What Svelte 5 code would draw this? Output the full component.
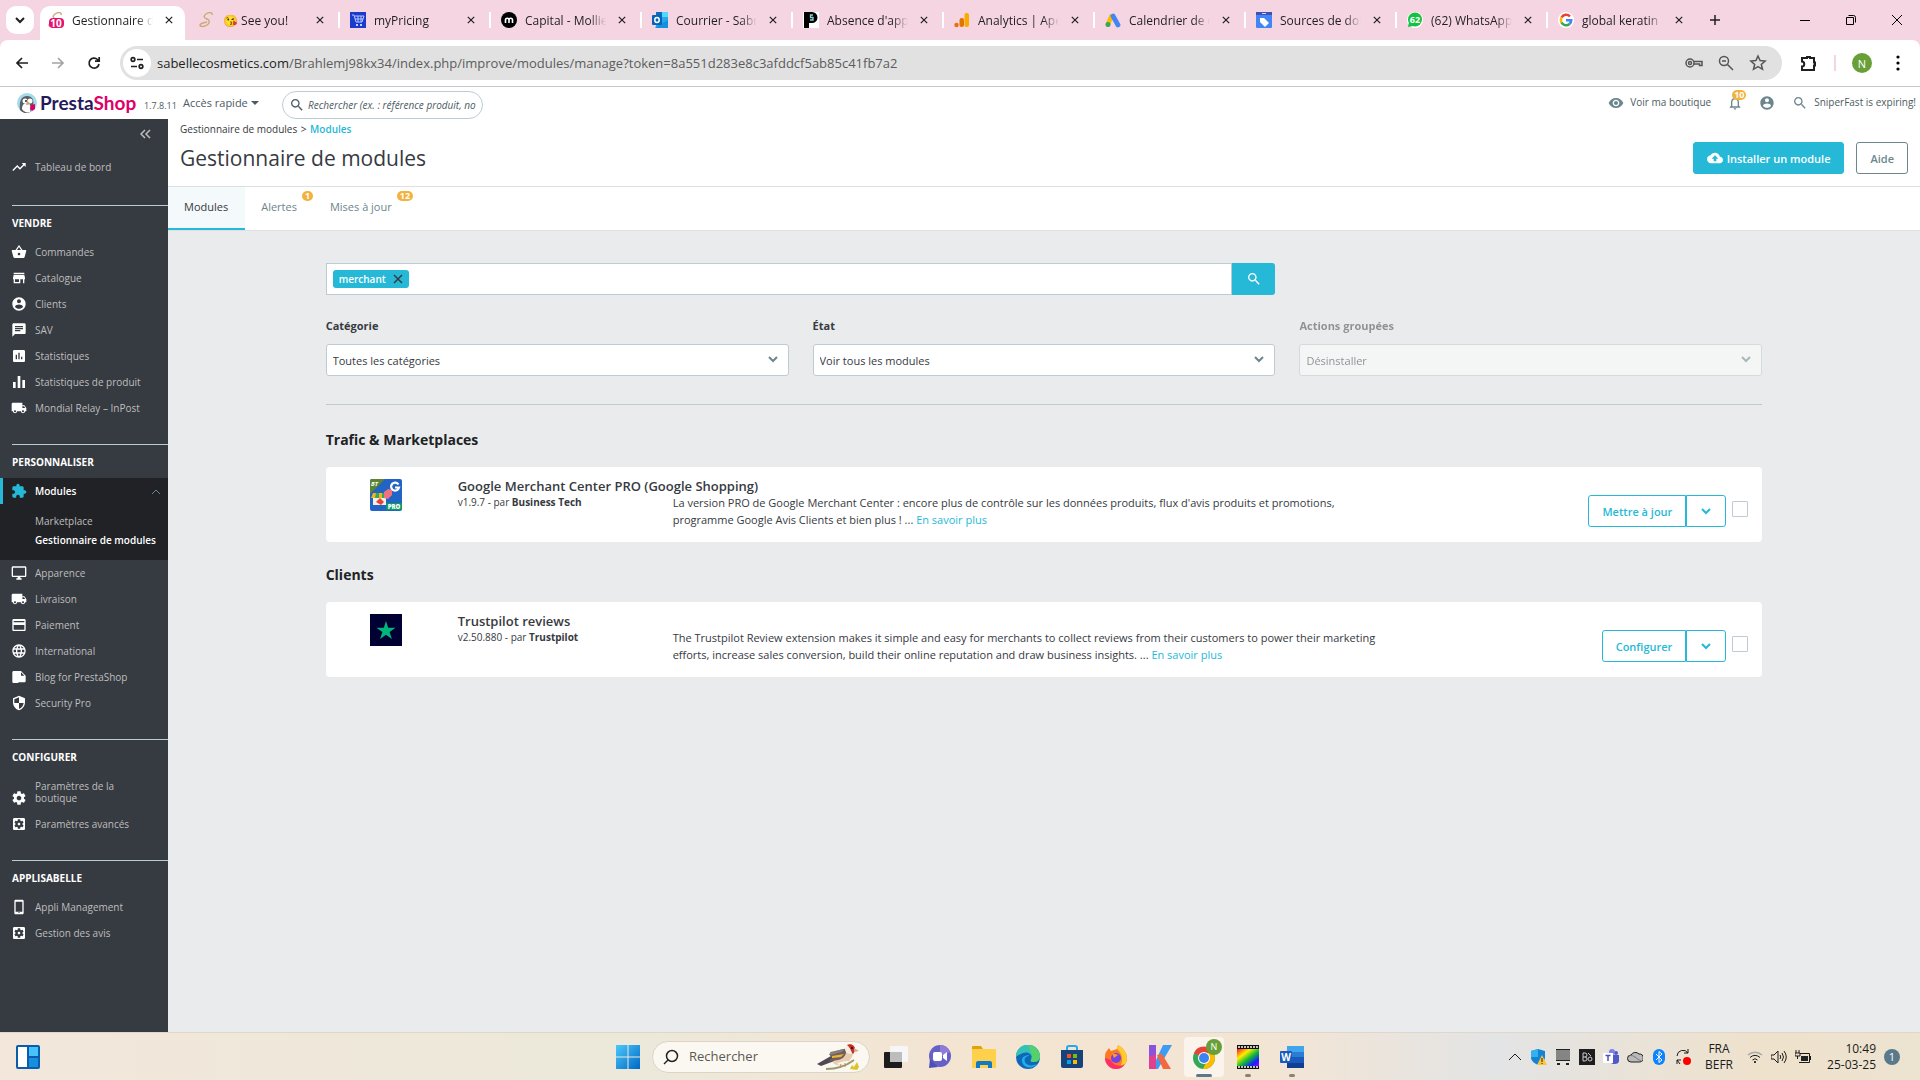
<script lang="ts">
  const tabs = [
    { icon: 'sabelle10', title: 'Gestionnaire de modules', active: true },
    { icon: 'sabelle', title: '😘 See you!' },
    { icon: 'pricing', title: 'myPricing' },
    { icon: 'mollie', title: 'Capital - Mollie Dashboard' },
    { icon: 'outlook', title: 'Courrier - Sabrina' },
    { icon: 'absence', title: "Absence d'apparition" },
    { icon: 'analytics', title: 'Analytics | Aperçu' },
    { icon: 'ads', title: 'Calendrier de diffusion' },
    { icon: 'merchant', title: 'Sources de données' },
    { icon: 'whatsapp', title: '(62) WhatsApp' },
    { icon: 'google', title: 'global keratin 300' }
  ];

  const icons: Record<string, string> = {
    trend: 'M16 6l2.29 2.29-4.88 4.88-4-4L2 16.59 3.41 18l6-6 4 4 6.3-6.29L22 12V6z',
    basket:
      'M17.21 9l-4.38-6.56c-.19-.28-.51-.42-.83-.42-.32 0-.64.14-.83.43L6.79 9H2c-.55 0-1 .45-1 1 0 .09.01.18.04.27l2.54 9.27c.23.84 1 1.46 1.92 1.46h13c.92 0 1.69-.62 1.93-1.46l2.54-9.27L23 10c0-.55-.45-1-1-1h-4.79zM9 9l3-4.4L15 9H9zm3 8c-1.1 0-2-.9-2-2s.9-2 2-2 2 .9 2 2-.9 2-2 2z',
    store: 'M20 4H4v2h16V4zm1 10v-2l-1-5H4l-1 5v2h1v6h10v-6h4v6h2v-6h1zm-9 4H6v-4h6v4z',
    account:
      'M12 2C6.48 2 2 6.48 2 12s4.48 10 10 10 10-4.48 10-10S17.52 2 12 2zm0 3c1.66 0 3 1.34 3 3s-1.34 3-3 3-3-1.34-3-3 1.34-3 3-3zm0 14.2c-2.5 0-4.71-1.28-6-3.22.03-1.99 4-3.08 6-3.08 1.99 0 5.97 1.09 6 3.08-1.29 1.94-3.5 3.22-6 3.22z',
    chat: 'M20 2H4c-1.1 0-1.99.9-1.99 2L2 22l4-4h14c1.1 0 2-.9 2-2V4c0-1.1-.9-2-2-2zM6 9h12v2H6V9zm8 5H6v-2h8v2zm4-6H6V6h12v2z',
    assessment:
      'M19 3H5c-1.1 0-2 .9-2 2v14c0 1.1.9 2 2 2h14c1.1 0 2-.9 2-2V5c0-1.1-.9-2-2-2zM9 17H7v-7h2v7zm4 0h-2V7h2v10zm4 0h-2v-4h2v4z',
    bars: 'M10 21h4V3h-4v18zm-7 0h4v-9H3v9zM17 9v12h4V9h-4z',
    truck:
      'M20 8h-3V4H3c-1.1 0-2 .9-2 2v11h2c0 1.66 1.34 3 3 3s3-1.34 3-3h6c0 1.66 1.34 3 3 3s3-1.34 3-3h2v-5l-3-4zM6 18.5c-.83 0-1.5-.67-1.5-1.5s.67-1.5 1.5-1.5 1.5.67 1.5 1.5-.67 1.5-1.5 1.5zm13.5-9l1.96 2.5H17V9.5h2.5zm-1.5 9c-.83 0-1.5-.67-1.5-1.5s.67-1.5 1.5-1.5 1.5.67 1.5 1.5-.67 1.5-1.5 1.5z',
    extension:
      'M20.5 11H19V7c0-1.1-.9-2-2-2h-4V3.5C13 2.12 11.88 1 10.5 1S8 2.12 8 3.5V5H4c-1.1 0-1.99.9-1.99 2v3.8H3.5c1.49 0 2.7 1.21 2.7 2.7s-1.21 2.7-2.7 2.7H2V20c0 1.1.9 2 2 2h3.8v-1.5c0-1.49 1.21-2.7 2.7-2.7 1.49 0 2.7 1.21 2.7 2.7V22H17c1.1 0 2-.9 2-2v-4h1.5c1.38 0 2.5-1.12 2.5-2.5S21.88 11 20.5 11z',
    desktop:
      'M21 2H3c-1.1 0-2 .9-2 2v12c0 1.1.9 2 2 2h7v2H8v2h8v-2h-2v-2h7c1.1 0 2-.9 2-2V4c0-1.1-.9-2-2-2zm0 14H3V4h18v12z',
    payment:
      'M20 3H4c-1.11 0-1.99.89-1.99 2L2 19c0 1.11.89 2 2 2h16c1.11 0 2-.89 2-2V5c0-1.11-.89-2-2-2zm0 16H4v-7h16v7zm0-11H4V6h16v2z',
    globe:
      'M11.99 2C6.47 2 2 6.48 2 12s4.47 10 9.99 10C17.52 22 22 17.52 22 12S17.52 2 11.99 2zm6.93 6h-2.95c-.32-1.25-.78-2.45-1.38-3.56 1.84.63 3.37 1.91 4.33 3.56zM12 4.04c.83 1.2 1.48 2.53 1.91 3.96h-3.82c.43-1.43 1.08-2.76 1.91-3.96zM4.26 14C4.1 13.36 4 12.69 4 12s.1-1.36.26-2h3.38c-.08.66-.14 1.32-.14 2s.06 1.34.14 2H4.26zm.82 2h2.95c.32 1.25.78 2.45 1.38 3.56-1.84-.63-3.37-1.9-4.33-3.56zm2.95-8H5.08c.96-1.66 2.49-2.93 4.33-3.56C8.81 5.55 8.35 6.75 8.03 8zM12 19.96c-.83-1.2-1.48-2.53-1.91-3.96h3.82c-.43 1.43-1.08 2.76-1.91 3.96zM14.34 14H9.66c-.09-.66-.16-1.32-.16-2s.07-1.35.16-2h4.68c.09.65.16 1.32.16 2s-.07 1.34-.16 2zm.25 5.56c.6-1.11 1.06-2.31 1.38-3.56h2.95c-.96 1.65-2.49 2.93-4.33 3.56zM16.36 14c.08-.66.14-1.32.14-2s-.06-1.34-.14-2h3.38c.16.64.26 1.31.26 2s-.1 1.36-.26 2h-3.38z',
    note: 'M4 3c-1.1 0-2 .9-2 2v14c0 1.1.9 2 2 2h7v-1h9c1.1 0 2-.9 2-2v-8l-7-7zm11 2l5 5h-5z',
    shield:
      'M12 1L3 5v6c0 5.55 3.84 10.74 9 12 5.16-1.26 9-6.45 9-12V5l-9-4zm0 10.99h7c-.53 4.12-3.28 7.79-7 8.94V12H5V6.3l7-3.11v8.8z',
    gear: 'M19.43 12.98c.04-.32.07-.64.07-.98s-.03-.66-.07-.98l2.11-1.65c.19-.15.24-.42.12-.64l-2-3.46c-.12-.22-.39-.3-.61-.22l-2.49 1c-.52-.4-1.08-.73-1.69-.98l-.38-2.65C14.46 2.18 14.25 2 14 2h-4c-.25 0-.46.18-.49.42l-.38 2.65c-.61.25-1.17.59-1.69.98l-2.49-1c-.23-.09-.49 0-.61.22l-2 3.46c-.13.22-.07.49.12.64l2.11 1.65c-.04.32-.07.65-.07.98s.03.66.07.98l-2.11 1.65c-.19.15-.24.42-.12.64l2 3.46c.12.22.39.3.61.22l2.49-1c.52.4 1.08.73 1.69.98l.38 2.65c.03.24.24.42.49.42h4c.25 0 .46-.18.49-.42l.38-2.65c.61-.25 1.17-.59 1.69-.98l2.49 1c.23.09.49 0 .61-.22l2-3.46c.12-.22.07-.49-.12-.64l-2.11-1.65zM12 15.5c-1.93 0-3.5-1.57-3.5-3.5s1.57-3.5 3.5-3.5 3.5 1.57 3.5 3.5-1.57 3.5-3.5 3.5z',
    settingsBox:
      'M12 10c-1.1 0-2 .9-2 2s.9 2 2 2 2-.9 2-2-.9-2-2-2zm7-7H5c-1.11 0-2 .9-2 2v14c0 1.1.89 2 2 2h14c1.11 0 2-.9 2-2V5c0-1.1-.89-2-2-2zm-1.75 9c0 .23-.02.46-.05.68l1.48 1.16c.13.11.17.3.08.45l-1.4 2.42c-.09.15-.27.21-.43.15l-1.74-.7c-.36.28-.76.51-1.18.69l-.26 1.85c-.03.17-.18.3-.35.3h-2.8c-.17 0-.32-.13-.35-.29l-.26-1.85c-.43-.18-.82-.41-1.18-.69l-1.74.7c-.16.06-.34 0-.43-.15l-1.4-2.42c-.09-.15-.05-.34.08-.45l1.48-1.16c-.03-.23-.05-.46-.05-.69 0-.23.02-.46.05-.68l-1.48-1.16c-.13-.11-.17-.3-.08-.45l1.4-2.42c.09-.15.27-.21.43-.15l1.74.7c.36-.28.76-.51 1.18-.69l.26-1.85c.03-.17.18-.3.35-.3h2.8c.17 0 .32.13.35.29l.26 1.85c.43.18.82.41 1.18.69l1.74-.7c.16-.06.34 0 .43.15l1.4 2.42c.09.15.05.34-.08.45l-1.48 1.16c.03.23.05.46.05.69z',
    phone: 'M17 1H7C5.9 1 5 1.9 5 3v18c0 1.1.9 2 2 2h10c1.1 0 2-.9 2-2V3c0-1.1-.9-2-2-2zm-4 20h-2v-1h2v1zm4-2H7V4h10v15z',
    eye: 'M12 4.5C7 4.5 2.73 7.61 1 12c1.73 4.39 6 7.5 11 7.5s9.27-3.11 11-7.5c-1.73-4.39-6-7.5-11-7.5zM12 17c-2.76 0-5-2.24-5-5s2.24-5 5-5 5 2.24 5 5-2.24 5-5 5zm0-8c-1.66 0-3 1.34-3 3s1.34 3 3 3 3-1.34 3-3-1.34-3-3-3z',
    bell: 'M12 22c1.1 0 2-.9 2-2h-4c0 1.1.9 2 2 2zm6-6v-5c0-3.07-1.63-5.64-4.5-6.32V4c0-.83-.67-1.5-1.5-1.5s-1.5.67-1.5 1.5v.68C7.64 5.36 6 7.92 6 11v5l-2 2v1h16v-1l-2-2zm-2 1H8v-6c0-2.48 1.51-4.5 4-4.5s4 2.02 4 4.5v6z',
    search:
      'M15.5 14h-.79l-.28-.27C15.41 12.59 16 11.11 16 9.5 16 5.91 13.09 3 9.5 3S3 5.91 3 9.5 5.91 16 9.5 16c1.61 0 3.09-.59 4.23-1.57l.27.28v.79l5 4.99L20.49 19l-4.99-5zm-6 0C7.01 14 5 11.99 5 9.5S7.01 5 9.5 5 14 7.01 14 9.5 11.99 14 9.5 14z',
    upload:
      'M19.35 10.04C18.67 6.59 15.64 4 12 4 9.11 4 6.6 5.64 5.35 8.04 2.34 8.36 0 10.91 0 14c0 3.31 2.69 6 6 6h13c2.76 0 5-2.24 5-5 0-2.64-2.05-4.78-4.65-4.96zM14 13v4h-4v-4H7l5-5 5 5h-3z'
  };

  const menu = [
    {
      title: 'Vendre',
      items: [
        { icon: 'basket', label: 'Commandes' },
        { icon: 'store', label: 'Catalogue' },
        { icon: 'account', label: 'Clients' },
        { icon: 'chat', label: 'SAV' },
        { icon: 'assessment', label: 'Statistiques' },
        { icon: 'bars', label: 'Statistiques de produit' },
        { icon: 'truck', label: 'Mondial Relay – InPost' }
      ]
    },
    {
      title: 'Personnaliser',
      items: [
        { icon: 'extension', label: 'Modules', children: ['Marketplace', 'Gestionnaire de modules'] },
        { icon: 'desktop', label: 'Apparence' },
        { icon: 'truck', label: 'Livraison' },
        { icon: 'payment', label: 'Paiement' },
        { icon: 'globe', label: 'International' },
        { icon: 'note', label: 'Blog for PrestaShop' },
        { icon: 'shield', label: 'Security Pro' }
      ]
    },
    {
      title: 'Configurer',
      items: [
        { icon: 'gear', label: 'Paramètres de la boutique' },
        { icon: 'settingsBox', label: 'Paramètres avancés' }
      ]
    },
    {
      title: 'Applisabelle',
      items: [
        { icon: 'phone', label: 'Appli Management' },
        { icon: 'settingsBox', label: 'Gestion des avis' }
      ]
    }
  ];

  const filters = [
    { id: 'category', label: 'Catégorie', value: 'Toutes les catégories', disabled: false },
    { id: 'status', label: 'État', value: 'Voir tous les modules', disabled: false },
    { id: 'bulk', label: 'Actions groupées', value: 'Désinstaller', disabled: true }
  ];

  const groups = [
    {
      title: 'Trafic & Marketplaces',
      logo: 'gmc',
      name: 'Google Merchant Center PRO (Google Shopping)',
      version: 'v1.9.7',
      author: 'Business Tech',
      text: "La version PRO de Google Merchant Center : encore plus de contrôle sur les données produits, flux d'avis produits et promotions, programme Google Avis Clients et bien plus ! ...",
      action: 'Mettre à jour'
    },
    {
      title: 'Clients',
      logo: 'trustpilot',
      name: 'Trustpilot reviews',
      version: 'v2.50.880',
      author: 'Trustpilot',
      text: 'The Trustpilot Review extension makes it simple and easy for merchants to collect reviews from their customers to power their marketing efforts, increase sales conversion, build their online reputation and draw business insights. ...',
      action: 'Configurer'
    }
  ];

  const apps = ['taskview', 'chat', 'folder', 'edge', 'store', 'firefox', 'klarna', 'chrome', 'spectrum', 'word'];
  const tray = ['up', 'defender', 'drive', 'bo', 'teams', 'cloud', 'bluetooth', 'sync'];

  let keywords = $state(['merchant']);
  let query = $state('');

  function removeKeyword(word: string) {
    keywords = keywords.filter((k) => k !== word);
  }
</script>

{#snippet icon(name: string)}
  <svg class="icon" viewBox="0 0 24 24" aria-hidden="true"><path d={icons[name]} /></svg>
{/snippet}

{#snippet chevron()}
  <svg class="chevron" viewBox="0 0 12 12" aria-hidden="true"><path d="M2 4l4 4 4-4" /></svg>
{/snippet}

{#snippet cross()}
  <svg class="cross" viewBox="0 0 10 10" aria-hidden="true"><path d="M1 1l8 8M9 1L1 9" /></svg>
{/snippet}

{#snippet favicon(name: string)}
  <svg class="favicon" viewBox="0 0 16 16" aria-hidden="true">
    {#if name === 'sabelle' || name === 'sabelle10'}
      <path d="M13 3c1-3-3-3-6-1S5 6 8 7s3 4 0 6-7 2-7 0 4-2 7-3" fill="none" stroke="#cda878" stroke-width="1.4" />
      {#if name === 'sabelle10'}
        <rect x="1" y="6" width="15" height="10" rx="4" fill="#e5136d" />
        <text x="8" y="15" text-anchor="middle" font-size="10" font-weight="700" fill="#fff">10</text>
      {/if}
    {:else if name === 'pricing'}
      <rect width="16" height="16" fill="#1a3bcc" />
      <path d="M2 3h2l2 7h6l2-6H5M5 7h8M8 4v6M11 4v6" fill="none" stroke="#b9c8ff" />
      <circle cx="7" cy="13" r="1" fill="#fff" /><circle cx="11" cy="13" r="1" fill="#fff" />
    {:else if name === 'mollie'}
      <circle cx="8" cy="8" r="8" fill="#000" />
      <path d="M4.5 11V8a1.7 1.7 0 013.5 0v3V8a1.7 1.7 0 013.5 0v3" fill="none" stroke="#fff" stroke-width="1.6" />
    {:else if name === 'outlook'}
      <path d="M4 0h12v14H4z" fill="#28a8ea" /><path d="M4 0h6v5H4z" fill="#0f6cbd" /><path d="M10 0h6v5h-6z" fill="#50d9ff" />
      <path d="M3 15l13-7v8H4z" fill="#1490df" />
      <rect y="3" width="10" height="10" rx="1" fill="#0364b8" /><ellipse cx="5" cy="8" rx="2.2" ry="2.5" fill="none" stroke="#fff" stroke-width="1.5" />
    {:else if name === 'absence'}
      <rect width="16" height="16" fill="#fff" />
      <path d="M1 0h8a5.5 5.5 0 010 11H6v5H1z" fill="#000" />
      <path d="M10 3H7.500v2.500H10V8H7" fill="none" stroke="#8fd3e0" stroke-width="1.3" />
    {:else if name === 'analytics'}
      <rect x="10.5" y="1" width="4.5" height="14" rx="2" fill="#f9ab00" /><rect x="5.5" y="6" width="4.5" height="9" rx="2" fill="#e37400" /><circle cx="2.5" cy="13" r="2.2" fill="#e8710a" />
    {:else if name === 'ads'}
      <path d="M7 3L3 12" stroke="#fbbc04" stroke-width="4.5" /><path d="M8 4l5 9" stroke="#4285f4" stroke-width="4.8" stroke-linecap="round" /><circle cx="3" cy="12.5" r="2.5" fill="#34a853" />
    {:else if name === 'merchant'}
      <rect width="16" height="16" rx="1" fill="#4285f4" /><path d="M0 0h16v3H0z" fill="#3f51b5" /><path d="M6 1h4v1H6z" fill="#cfdcff" />
      <path d="M4 6h4l5 5-4 4-5-5z" fill="#fff" />
    {:else if name === 'whatsapp'}
      <circle cx="8" cy="8" r="8" fill="#fff" /><circle cx="8" cy="7.5" r="7" fill="#15c143" /><path d="M1 15l1-5 4 4z" fill="#15c143" />
      <text x="8" y="11" text-anchor="middle" font-size="9" font-weight="700" fill="#fff">62</text>
    {:else}
      <circle cx="8" cy="8" r="8" fill="#fff" />
      <g fill="none" stroke-width="2.6">
        <path d="M12 4.5A5.2 5.2 0 003.5 5.5" stroke="#ea4335" /><path d="M3.5 5.5a5.2 5.2 0 000 5" stroke="#fbbc04" />
        <path d="M3.5 10.5a5.2 5.2 0 008 1.5" stroke="#34a853" /><path d="M11.5 12a5 5 0 001.7-3.7H8" stroke="#4285f4" />
      </g>
    {/if}
  </svg>
{/snippet}

{#snippet moduleLogo(name: string)}
  <svg class="module-logo" viewBox="0 0 32 32" aria-hidden="true">
    {#if name === 'gmc'}
      <rect width="32" height="32" rx="2" fill="#2263c6" />
      <path d="M2 0h13L0 15V2a2 2 0 012-2z" fill="#5c8432" />
      <text x="1" y="7" font-size="6" font-weight="700" font-style="italic" fill="#fff">BT</text>
      <path d="M28.500 5.500A4 4 0 1029 8.500H25" fill="none" stroke="#fff" stroke-width="2.2" />
      <path d="M3 15h13v11H3z" fill="#f5efe9" /><path d="M3 14h13l2 5H1z" fill="#f8b319" /><path d="M6 14h3v5H5zM12 14h3l1 5h-4z" fill="#36a852" />
      <path d="M14 13l4-3 4 1v5l-4 4-4-1z" fill="#f0727f" /><path d="M6 23l4-4 4 4-3 3z" fill="#e8452f" />
      <rect x="16" y="24" width="16" height="7" rx="1" fill="#0c9b62" />
      <text x="24" y="30" text-anchor="middle" font-size="6" font-weight="800" fill="#fff">PRO</text>
    {:else}
      <rect width="32" height="32" fill="#000032" />
      <path d="M16 7l2.200 6.800h7.300l-5.900 4.200 2.300 6.900-5.900-4.200-5.900 4.200 2.300-6.900-5.900-4.200h7.300z" fill="#00b67a" />
    {/if}
  </svg>
{/snippet}

{#snippet appIcon(name: string)}
  <svg class="app-icon" viewBox="0 0 24 24" aria-hidden="true">
    {#if name === 'taskview'}
      <rect y="7" width="18" height="16" rx="1" fill="#1c1c1c" /><rect x="6" y="1" width="18" height="16" rx="1" fill="#f6f6f6" /><path d="M6 7h12v10H6z" fill="#bdbdbd" />
    {:else if name === 'chat'}
      <circle cx="12" cy="11" r="11" fill="#6661c8" /><path d="M2 14L1 23l9-1z" fill="#4b4fb8" /><path d="M12 0a11 11 0 0110 7L12 12z" fill="#8f7bd8" />
      <rect x="5" y="7" width="9" height="9" rx="2" fill="#fff" /><path d="M15 10l4-3v9l-4-3z" fill="#fff" />
    {:else if name === 'folder'}
      <path d="M0 2a1 1 0 011-1h8l2 3h11v5H0z" fill="#e0a30b" /><rect y="4" width="24" height="19" rx="1" fill="#ffd04b" />
      <path d="M4 23v-5a2 2 0 012-2h12a2 2 0 012 2v5h-4v-3H8v3z" fill="#0f7ac8" />
    {:else if name === 'edge'}
      <circle cx="12" cy="12" r="12" fill="#0f67b7" /><path d="M0 12A12 12 0 0124 11c0 5-4 6-7 6-2 0-3-1-2-2 3-5-3-9-8-7-3 1-6 3-7 4z" fill="#35c1b8" />
      <path d="M12 0a12 12 0 0112 11c0 5-4 6-7 6-2 0-3-1-2-2 2-5 0-8-3-15z" fill="#56d06b" /><path d="M10 12c-4 4 1 10 8 8l3-1c-3 5-13 5-15-2-1-4 2-7 8-7z" fill="#1faeea" />
    {:else if name === 'store'}
      <path d="M7 6V3a2 2 0 012-2h6a2 2 0 012 2v3" fill="none" stroke="#26a9e8" stroke-width="2" /><path d="M1 5h22v16a2 2 0 01-2 2H3a2 2 0 01-2-2z" fill="#17427a" />
      <path d="M7 9h4v4H7z" fill="#f25022" /><path d="M13 9h4v4h-4z" fill="#7fba00" /><path d="M7 15h4v4H7z" fill="#00a4ef" /><path d="M13 15h4v4h-4z" fill="#ffb900" />
    {:else if name === 'firefox'}
      <path d="M2 7l3-4 2 3c2-1 4-1 6-2l1-4c5 3 9 8 9 13a11 11 0 01-22 0c0-3 0-4 1-6z" fill="#ff7a1f" /><path d="M14 0c5 3 9 8 9 13a11 11 0 01-8 10c5-6 4-14-2-19z" fill="#ffcb2e" />
      <path d="M1 13c0 6 5 11 11 11 4 0 7-2 9-5-5 3-12 2-14-4z" fill="#ff2d6a" /><circle cx="12" cy="13" r="5" fill="#7542e5" /><path d="M8 8c2 1 5 1 6 2l-4 3z" fill="#ff9a28" />
    {:else if name === 'klarna'}
      <path d="M1 0h7v24H1z" fill="#8a52dd" /><path d="M15 0h9L10 24H4z" fill="#3d9df3" /><path d="M9 10l5-1 9 15h-8z" fill="#f5683f" /><path d="M1 12l7-3v15H1z" fill="#df408f" />
    {:else if name === 'chrome'}
      <circle cx="12" cy="13" r="11" fill="#34a853" /><path d="M12 13L2 8a11 11 0 0120 0z" fill="#ea4335" /><path d="M12 13h11a11 11 0 01-12 11l4-9z" fill="#fbbc04" /><path d="M22 8a11 11 0 011 5l-8 3-3-8z" fill="#fbbc04" />
      <circle cx="12" cy="13" r="6" fill="#fff" /><circle cx="12" cy="13" r="5" fill="#3c83f1" />
    {:else if name === 'spectrum'}
      <defs>
        <linearGradient id="rainbow" x2="1" y2="1"><stop stop-color="#f12" /><stop offset=".3" stop-color="#fe0" /><stop offset=".55" stop-color="#1b3" /><stop offset=".8" stop-color="#12f" /><stop offset="1" stop-color="#a0f" /></linearGradient>
      </defs>
      <rect x="1" width="22" height="24" fill="#111" /><rect x="1" y="4" width="22" height="17" fill="url(#rainbow)" />
      <path d="M2 2h20M2 22h20" stroke="#fff" stroke-width="1.5" stroke-dasharray="2 1" />
    {:else}
      <rect x="7" y="1" width="17" height="22" rx="1" fill="#185abd" /><path d="M7 1h17v6H7z" fill="#41a5ee" /><path d="M7 7h17v5H7z" fill="#2b7cd3" /><path d="M7 18h17v5H7z" fill="#103f91" />
      <rect y="6" width="12" height="12" rx="1" fill="#185abd" /><text x="6" y="16" text-anchor="middle" font-size="10" font-weight="700" fill="#fff">W</text>
    {/if}
  </svg>
{/snippet}

{#snippet trayIcon(name: string)}
  <svg class="tray-icon" viewBox="0 0 16 16" aria-hidden="true">
    {#if name === 'up'}
      <path d="M2 11l6-6 6 6" class="line" />
    {:else if name === 'defender'}
      <path d="M7 0l7 2v6c0 4-3 6-7 8-4-2-7-4-7-8V2z" fill="#1383d4" /><path d="M7 0v8H0V2z" fill="#35b1f0" /><path d="M11 6l5 10H6z" fill="#fcc33c" /><path d="M11 9v4M11 14v1" stroke="#222" />
    {:else if name === 'drive'}
      <path d="M1 0h14v11H1z" fill="#858585" /><path d="M1 .5h14M1 11.500h14" stroke="#222" /><path d="M2 14h3v2H2zM11 14h3v2h-3z" fill="#222" />
    {:else if name === 'bo'}
      <rect width="16" height="16" fill="#1d1d1f" /><path d="M4 4v8h2a2 2 0 000-4 2 2 0 000-4zM4 8h2" fill="none" stroke="#ccc" /><circle cx="11" cy="10" r="2" fill="none" stroke="#ccc" /><path d="M9 4l3 3" stroke="#ccc" />
    {:else if name === 'teams'}
      <circle cx="13" cy="4" r="2" fill="#5059c9" /><circle cx="9" cy="3" r="3" fill="#7b83eb" /><path d="M6 6h10v6c0 2-2 3-4 3-4 0-6-2-6-5z" fill="#5059c9" /><rect y="4" width="10" height="10" fill="#fff" />
      <path d="M2.500 6.500h5M5 6.500V12" stroke="#4b53bc" stroke-width="1.5" />
    {:else if name === 'cloud'}
      <path d="M4 13a3 3 0 010-7 5 5 0 018-1 4 4 0 01.500 8z" fill="#b9b9b9" stroke="#222" />
      <path d="M2 7c5-2 7 3 12 5" fill="none" stroke="#777" />
    {:else if name === 'bluetooth'}
      <rect x="2" width="12" height="16" rx="6" fill="#0a84ff" /><path d="M5 5l6 6-3 2.500v-11L11 5l-6 6" fill="none" stroke="#fff" />
    {:else if name === 'sync'}
      <path d="M2 7a6 6 0 0111-3M13 0v4H9M2 15v-4h4M2 11l3 4" class="line" /><circle cx="12" cy="12" r="4" fill="#f00" />
    {:else if name === 'wifi'}
      <path d="M1 6a10 10 0 0114 0" fill="none" stroke="#aaa" stroke-width="1.5" /><path d="M3 8.500a7 7 0 0110 0M5.500 11a3.500 3.500 0 015 0" class="line" /><circle cx="8" cy="13" r="1" />
    {:else if name === 'sound'}
      <path d="M0 6h3l4-4v12l-4-4H0zM9 6q1.500 2 0 4M11 4q3 4 0 8M13 2q4.500 6 0 12" class="line" />
    {:else}
      <path d="M6 7h7v5H6z" fill="#222" /><path d="M5 4.500h9.500v9H4M15.500 7v4M1 1v3M4 1v3M0 4h5v3H0zM2.500 7v3" class="line" />
    {/if}
  </svg>
{/snippet}

<div class="screen">
  <header class="browser">
    <div class="tab-strip">
      <button class="tab-search" type="button" aria-label="Rechercher dans les onglets">{@render chevron()}</button>
      <div class="tab-list">
        {#each tabs as tab}
          <div class="tab" class:active={tab.active}>
            {@render favicon(tab.icon)}
            <span class="tab-title">{tab.title}</span>
            <button type="button" class="tab-close" aria-label="Fermer">{@render cross()}</button>
          </div>
        {/each}
      </div>
      <button class="new-tab" type="button" aria-label="Nouvel onglet">
        <svg viewBox="0 0 12 12"><path d="M6 1v10M1 6h10" /></svg>
      </button>
      <div class="window-controls">
        <button type="button" aria-label="Réduire"><svg viewBox="0 0 10 10"><path d="M0 5.500h10" /></svg></button>
        <button type="button" aria-label="Restaurer"><svg viewBox="0 0 10 10"><path d="M.5 2.500h7v7h-7zM2.500 .5h5a2 2 0 012 2v5" /></svg></button>
        <button type="button" aria-label="Fermer la fenêtre"><svg viewBox="0 0 10 10"><path d="M0 0l10 10M10 0L0 10" /></svg></button>
      </div>
    </div>
    <div class="toolbar">
      <div class="nav-buttons">
        <button type="button" aria-label="Précédent"><svg viewBox="0 0 16 16"><path d="M14 8H3M8 3L3 8l5 5" /></svg></button>
        <button type="button" aria-label="Suivant" disabled><svg viewBox="0 0 16 16"><path d="M2 8h11M8 3l5 5-5 5" /></svg></button>
        <button type="button" aria-label="Actualiser"><svg viewBox="0 0 16 16"><path d="M13 9a5 5 0 11-1.500-4.500L13 6M13.200 2v4.200H9" /></svg></button>
      </div>
      <div class="address">
        <span class="site-info"><svg viewBox="0 0 16 16"><circle cx="4" cy="4.5" r="1.8" /><path d="M8 4.500h6M2 11.500h6" /><circle cx="12" cy="11.5" r="1.8" /></svg></span>
        <p class="url"><span>sabellecosmetics.com</span>/Brahlemj98kx34/index.php/improve/modules/manage?token=8a551d283e8c3afddcf5ab85c41fb7a2</p>
        <div class="address-icons">
          <svg viewBox="0 0 18 18"><circle cx="5" cy="9" r="4" /><circle cx="5" cy="9" r="1.5" /><path d="M9 7.500h8v4h-2.500V10H9" /></svg>
          <svg viewBox="0 0 18 18"><circle cx="7" cy="7" r="4.5" /><path d="M10.500 10.500L16 16M5 7h4" /></svg>
          <svg viewBox="0 0 18 18"><path d="M9 2l2.100 4.600 5 .5-3.800 3.300 1.200 4.900L9 12.700l-4.500 2.600 1.200-4.900L1.900 7.100l5-.5z" /></svg>
        </div>
      </div>
      <button type="button" class="extensions" aria-label="Extensions">
        <svg viewBox="0 0 18 18"><path d="M2 4h5V3h3v1h4v4.500h1v3h-1V16H2v-3.500c3 0 3-5 0-5z" /></svg>
      </button>
      <span class="toolbar-separator"></span>
      <button type="button" class="avatar">N</button>
      <button type="button" class="more" aria-label="Menu"><svg viewBox="0 0 4 16"><circle cx="2" cy="2" r="1.6" /><circle cx="2" cy="8" r="1.6" /><circle cx="2" cy="14" r="1.6" /></svg></button>
    </div>
  </header>

  <div class="shop-header">
    <a class="brand" href="#home">
      <svg viewBox="0 0 20 20" aria-hidden="true">
        <circle cx="10" cy="10" r="10" fill="#a4dbe8" /><path d="M3 17C2 9 4 3 10 3s7 5 6 10l-3 6c-4 2-7 1-10-2z" fill="#5a5e68" />
        <path d="M5 16c0-4 2-6 5-6s4 3 3 9c-3 1-6 0-8-3z" fill="#fff" /><circle cx="8" cy="8" r="2.5" fill="#fff" /><circle cx="13" cy="8" r="2.5" fill="#fff" />
        <circle cx="9" cy="8" r="1" fill="#222" /><path d="M10 8l4 3-5 1z" fill="#c8a06a" /><path d="M14 12l4-1v5l-3 2-2-2z" fill="#df0067" />
      </svg>
      <strong>Presta<span>Shop</span></strong>
    </a>
    <small>1.7.8.11</small>
    <button type="button" class="quick-access">Accès rapide <i></i></button>
    <label class="global-search">
      {@render icon('search')}
      <input type="text" aria-label="Rechercher" placeholder="Rechercher (ex. : référence produit, no" />
    </label>
    <nav class="shop-links">
      <a href="#shop">{@render icon('eye')} Voir ma boutique</a>
      <button type="button" class="bell" aria-label="Notifications">{@render icon('bell')}<span class="badge">10</span></button>
      <button type="button" class="user" aria-label="Compte">{@render icon('account')}</button>
      <a href="#sniperfast">{@render icon('search')} SniperFast is expiring!</a>
    </nav>
  </div>

  <div class="body">
    <aside>
      <button type="button" class="collapse" aria-label="Réduire le menu"><svg viewBox="0 0 12 10"><path d="M5 1L1 5l4 4M10 1L6 5l4 4" /></svg></button>
      <a class="item dashboard" href="#dashboard">{@render icon('trend')} <span>Tableau de bord</span></a>
      {#each menu as section}
        <section>
          <h2>{section.title}</h2>
          <ul>
            {#each section.items as item}
              <li class:open={item.children}>
                <a class="item" href="#menu">
                  {@render icon(item.icon)}
                  <span>{item.label}</span>
                  {#if item.children}<svg class="caret-up" viewBox="0 0 10 10"><path d="M1 7l4-4 4 4" /></svg>{/if}
                </a>
                {#if item.children}
                  <div class="submenu">
                    {#each item.children as child, i}
                      <a href="#submenu" class:current={i === 1}>{child}</a>
                    {/each}
                  </div>
                {/if}
              </li>
            {/each}
          </ul>
        </section>
      {/each}
    </aside>

    <main>
      <div class="page-head">
        <div>
          <p class="breadcrumb">Gestionnaire de modules <span>&gt;</span> <a href="#modules">Modules</a></p>
          <h1>Gestionnaire de modules</h1>
        </div>
        <div class="page-actions">
          <button type="button" class="primary">{@render icon('upload')} Installer un module</button>
          <button type="button" class="help">Aide</button>
        </div>
      </div>
      <nav class="page-tabs">
        <a href="#modules" class="selected">Modules</a>
        <a href="#alerts">Alertes<span class="badge">1</span></a>
        <a href="#updates">Mises à jour<span class="badge">12</span></a>
      </nav>

      <div class="content">
        <form class="search" onsubmit={(e) => e.preventDefault()}>
          <div class="search-box">
            {#each keywords as word}
              <span class="tag">{word}<button type="button" aria-label="Retirer" onclick={() => removeKeyword(word)}>{@render cross()}</button></span>
            {/each}
            <input type="text" aria-label="Rechercher des modules" bind:value={query} />
          </div>
          <button type="submit" aria-label="Lancer la recherche">{@render icon('search')}</button>
        </form>

        <div class="filters">
          {#each filters as filter}
            <div class="filter" class:disabled={filter.disabled}>
              <label for={filter.id}>{filter.label}</label>
              <div class="select">
                <select id={filter.id} disabled={filter.disabled}><option>{filter.value}</option></select>
                {@render chevron()}
              </div>
            </div>
          {/each}
        </div>

        {#each groups as group}
          <h2>{group.title}</h2>
          <article>
            {@render moduleLogo(group.logo)}
            <div class="module-info">
              <h3>{group.name}</h3>
              <div class="module-row">
                <p class="meta">{group.version} - par <b>{group.author}</b></p>
                <p class="description">{group.text} <a href="#more">En savoir plus</a></p>
              </div>
            </div>
            <div class="module-actions">
              <button type="button">{group.action}</button>
              <button type="button" class="drop" aria-label="Plus d'actions">{@render chevron()}</button>
              <input type="checkbox" aria-label={`Sélectionner ${group.name}`} />
            </div>
          </article>
        {/each}
      </div>
    </main>
  </div>

  <footer>
    <button type="button" class="widgets" aria-label="Widgets">
      <svg viewBox="0 0 24 24"><rect width="24" height="24" rx="2" fill="#0b5cad" /><rect x="2" y="2" width="9" height="20" fill="#fff" /><rect x="13" y="2" width="9" height="9" fill="#45c4f9" /><rect x="13" y="13" width="9" height="9" fill="#1490df" /></svg>
    </button>
    <div class="taskbar-apps">
      <button type="button" class="app" aria-label="Démarrer">
        <svg class="app-icon" viewBox="0 0 24 24">
          <defs><linearGradient id="win" x2="1" y2="1"><stop stop-color="#4cc9fb" /><stop offset="1" stop-color="#0067c5" /></linearGradient></defs>
          <path d="M0 0h11.500v11.500H0zM12.500 0H24v11.500H12.500zM0 12.500h11.500V24H0zM12.500 12.500H24V24H12.500z" fill="url(#win)" />
        </svg>
      </button>
      <label class="taskbar-search">
        <svg class="glass" viewBox="0 0 16 16"><circle cx="9" cy="7" r="5.5" /><path d="M5 11l-4 4" /></svg>
        <input type="text" placeholder="Rechercher" aria-label="Rechercher sur le PC" />
        <svg class="bird" viewBox="0 0 46 26" aria-hidden="true">
          <path d="M9 25c10 0 20-3 28-9" fill="none" stroke="#9a9a6a" stroke-width="2" />
          <path d="M0 20l14-8 6 4-8 3-8 3z" fill="#4f4a52" />
          <path d="M16 19c4 4 12 3 16-2 4-4 5-8 4-12l-8-1c-4 3-9 8-12 15z" fill="#e9cdb2" />
          <path d="M20 20c4 2 9 1 12-3-3 0-8 0-12 3z" fill="#fbf4ea" />
          <path d="M12 10c6-3 12-5 17-5 1 5-2 10-8 11-4 1-8 1-10 2l4-4z" fill="#6d5f5d" />
          <path d="M15 12l12-2-3 3-9 1z" fill="#f0b432" />
          <path d="M13 8l14-3-2 3-11 3z" fill="#8b7d78" />
          <circle cx="33" cy="5" r="5" fill="#f7eee2" /><path d="M30 1c3-2 8 0 8 4 0 2-1 4-2 5-2-2-2-6-6-9z" fill="#cc2e23" />
          <path d="M37 4l5 3-5 1z" fill="#d8a596" /><circle cx="35" cy="4" r="1" fill="#111" />
          <path d="M33 25l2-4 2 2 3-5 2 5-2 3z" fill="#dbc528" /><path d="M24 20l-1 4M28 19v4" stroke="#b58a6a" />
        </svg>
      </label>
      {#each apps as app}
        <button type="button" class="app" class:focused={app === 'chrome'} class:running={app === 'spectrum' || app === 'word'} aria-label={app}>
          {@render appIcon(app)}
          {#if app === 'chrome'}<span class="profile">N</span>{/if}
        </button>
      {/each}
    </div>
    <div class="tray">
      {#each tray as name}{@render trayIcon(name)}{/each}
      <p class="language">FRA<br />BEFR</p>
      {@render trayIcon('wifi')}
      {@render trayIcon('sound')}
      {@render trayIcon('battery')}
      <p class="clock">10:49<br />25-03-25</p>
      <span class="count">1</span>
    </div>
  </footer>
</div>

<style>
  :global(body) {
    margin: 0;
  }

  .screen {
    min-height: 100vh;
    display: flex;
    flex-direction: column;
    background: #eaebec;
    color: #363a41;
    font: 11px/17px 'Open Sans', 'Noto Sans', sans-serif;
  }

  .screen *,
  .screen *::before {
    box-sizing: border-box;
  }

  button,
  input,
  select {
    margin: 0;
    padding: 0;
    border: 0;
    background: none;
    color: inherit;
    font: inherit;
  }

  button,
  select {
    cursor: pointer;
  }

  a {
    color: inherit;
    text-decoration: none;
  }

  p,
  h1,
  h2,
  h3,
  ul {
    margin: 0;
    padding: 0;
    list-style: none;
  }

  svg {
    display: block;
    flex: none;
  }

  .icon {
    width: 16px;
    height: 16px;
    fill: currentColor;
  }

  .chevron {
    width: 12px;
    height: 12px;
    fill: none;
    stroke: currentColor;
    stroke-width: 2;
  }

  .cross {
    width: 10px;
    height: 10px;
    fill: none;
    stroke: currentColor;
    stroke-width: 1.5;
  }

  /* browser window */
  .browser {
    background: #f6d5e3;
    color: #1f1f1f;
  }

  .tab-strip {
    height: 40px;
    display: flex;
    align-items: stretch;
    padding-left: 6px;
  }

  .tab-search {
    width: 28px;
    height: 28px;
    margin: 6px 6px 0 0;
    display: grid;
    place-items: center;
    border-radius: 10px;
    background: #fff;
  }

  .tab-list {
    display: flex;
    flex: 0 1 1661px;
    min-width: 0;
  }

  .tab {
    position: relative;
    flex: 1 1 0;
    min-width: 0;
    display: flex;
    align-items: center;
    gap: 8px;
    padding: 0 12px 6px 8px;
    margin: 6px 6px 0 0;
    border-radius: 10px 10px 0 0;
    font-size: 12px;
  }

  .tab.active {
    background: #fff;
  }

  .tab:nth-child(n + 3)::before {
    content: '';
    position: absolute;
    left: -4px;
    top: 6px;
    width: 2px;
    height: 16px;
    background: #fff;
  }

  .favicon {
    width: 16px;
    height: 16px;
  }

  .tab-title {
    flex: 1;
    overflow: hidden;
    white-space: nowrap;
    mask-image: linear-gradient(to right, #000 80%, transparent);
  }

  .tab-close {
    margin-left: 4px;
  }

  .tab-close .cross {
    width: 8px;
    height: 8px;
  }

  .new-tab {
    width: 28px;
    display: grid;
    place-items: center;
  }

  .new-tab svg {
    width: 12px;
    height: 12px;
    stroke: #1f1f1f;
    stroke-width: 1.5;
  }

  .window-controls {
    margin-left: auto;
    display: flex;
  }

  .window-controls button {
    width: 46px;
    display: grid;
    place-items: center;
  }

  .window-controls svg {
    width: 10px;
    height: 10px;
    fill: none;
    stroke: #000;
  }

  .toolbar {
    height: 47px;
    display: flex;
    align-items: center;
    padding: 0 20px 0 14px;
    border-bottom: 1px solid #c9c9cb;
    border-radius: 8px 8px 0 0;
    background: #fff;
  }

  .nav-buttons {
    display: flex;
    gap: 20px;
    margin-right: 18px;
  }

  .nav-buttons svg,
  .site-info svg {
    width: 16px;
    height: 16px;
    fill: none;
    stroke: #1f1f1f;
    stroke-width: 1.7;
  }

  .nav-buttons button:disabled {
    opacity: 0.4;
  }

  .address {
    flex: 1;
    min-width: 0;
    height: 34px;
    display: flex;
    align-items: center;
    padding: 0 15px 0 3px;
    border-radius: 17px;
    background: #e1e1e1;
  }

  .site-info {
    width: 28px;
    height: 28px;
    display: grid;
    place-items: center;
    border-radius: 14px;
    background: #fff;
  }

  .url {
    flex: 1;
    min-width: 0;
    overflow: hidden;
    padding-left: 6px;
    color: #5c5c5c;
    font-size: 13px;
    white-space: nowrap;
  }

  .url span {
    color: #1f1f1f;
  }

  .address-icons {
    display: flex;
    gap: 14px;
  }

  .address-icons svg {
    width: 18px;
    height: 18px;
    fill: none;
    stroke: #555;
    stroke-width: 1.5;
  }

  .extensions {
    margin: 0 16px 0 18px;
  }

  .extensions svg {
    width: 18px;
    height: 18px;
    fill: none;
    stroke: #1f1f1f;
    stroke-width: 2;
  }

  .toolbar-separator {
    width: 2px;
    height: 16px;
    background: #f6d5e3;
  }

  .avatar {
    width: 20px;
    height: 20px;
    margin: 0 24px 0 16px;
    border-radius: 50%;
    background: #689f38;
    color: #fff;
  }

  .more svg {
    width: 4px;
    height: 16px;
  }

  /* PrestaShop header */
  .shop-header {
    height: 32px;
    display: flex;
    align-items: flex-start;
    padding: 4px 4px 0 17px;
    background: #fff;
    color: #4c5b63;
    font-size: 10px;
    white-space: nowrap;
  }

  .brand {
    display: flex;
    align-items: center;
    gap: 3px;
    width: 127px;
  }

  .brand svg {
    width: 20px;
    height: 20px;
  }

  .brand strong {
    color: #251b5b;
    font: 700 19px/24px Lato, sans-serif;
  }

  .brand span {
    color: #df0067;
  }

  .shop-header small {
    width: 39px;
    padding-top: 6px;
    font: 9px/17px 'Open Sans', sans-serif;
  }

  .quick-access {
    width: 99px;
    padding-top: 3px;
    display: flex;
    align-items: center;
    gap: 3px;
    font-size: 11px;
  }

  .quick-access i {
    border: 4px solid transparent;
    border-top-color: #4c5b63;
    border-bottom: 0;
  }

  .global-search {
    width: 201px;
    height: 28px;
    display: flex;
    align-items: center;
    gap: 3px;
    padding: 0 2px 0 6px;
    border: 1px solid #bbcdd2;
    border-radius: 14px;
  }

  .global-search input {
    flex: 1;
    min-width: 0;
    outline: none;
    font-style: italic;
  }

  .global-search input::placeholder,
  .taskbar-search input::placeholder {
    color: inherit;
    opacity: 1;
  }

  .shop-links {
    margin-left: auto;
    padding-top: 3px;
    display: flex;
    align-items: center;
  }

  .shop-links a {
    display: flex;
    align-items: center;
    gap: 6px;
  }

  .shop-links .icon {
    color: #6c868e;
  }

  .badge {
    position: absolute;
    min-width: 10px;
    padding: 0 3px;
    border-radius: 5px;
    background: #f4b13d;
    color: #fff;
    font: 700 9px/10px 'Open Sans', sans-serif;
    text-align: center;
  }

  .bell {
    position: relative;
    margin: 0 16px;
  }

  .bell .badge {
    left: 5px;
    top: -5px;
    padding: 0 2px;
  }

  .user {
    margin-right: 17px;
  }

  .body {
    flex: 1;
    display: flex;
  }

  /* side menu */
  aside {
    flex: 0 0 168px;
    background: #363a41;
    color: #bebebe;
    font-size: 10px;
    line-height: 12px;
  }

  .collapse {
    display: block;
    margin: 10px 16px 15px auto;
  }

  .collapse svg {
    width: 12px;
    height: 10px;
    fill: none;
    stroke: #bebebe;
    stroke-width: 1.5;
  }

  .item {
    display: flex;
    align-items: flex-end;
    gap: 8px;
    padding: 7px 0 7px 11px;
  }

  .item span {
    max-width: 116px;
  }

  .item .icon {
    margin: -2px 0;
    color: #fff;
  }

  .dashboard {
    margin-bottom: 25px;
  }

  aside section {
    padding-bottom: 23px;
  }

  aside section::before {
    content: '';
    display: block;
    height: 1px;
    margin-left: 12px;
    background: #bbcdd2;
  }

  aside h2 {
    padding: 11px 0 10px 12px;
    color: #fff;
    font-size: 10px;
    line-height: 12px;
    text-transform: uppercase;
  }

  .open {
    background: #202226;
    color: #fff;
    font-weight: 600;
  }

  .open .item {
    padding-left: 8px;
    border-left: 3px solid #25b9d7;
  }

  .open .icon {
    color: #25b9d7;
  }

  .caret-up {
    width: 10px;
    height: 10px;
    margin: 0 7px 0 auto;
    fill: none;
    stroke: #6c868e;
  }

  .submenu {
    display: grid;
    gap: 7px;
    padding: 11px 0 14px 35px;
    color: #bebebe;
    font-weight: 400;
  }

  .submenu .current {
    color: #fff;
    font-weight: 600;
    white-space: nowrap;
  }

  /* page */
  main {
    flex: 1;
    min-width: 0;
  }

  .page-head {
    display: flex;
    justify-content: space-between;
    align-items: flex-start;
    padding: 2px 12px 12px;
    border-bottom: 1px solid #dfdfdf;
    background: #fff;
  }

  .breadcrumb {
    font-size: 10px;
  }

  .breadcrumb span {
    margin: 0 1px;
  }

  .breadcrumb a {
    color: #25b9d7;
    font-weight: 600;
  }

  h1 {
    margin-top: 4px;
    font-size: 21px;
    font-weight: 400;
    line-height: 32px;
  }

  .page-actions {
    display: flex;
    gap: 12px;
    padding-top: 21px;
  }

  .page-actions button {
    height: 32px;
    display: flex;
    align-items: center;
    gap: 4px;
    padding: 0 13px;
    border: 1px solid #6c868e;
    border-radius: 3px;
    color: #6c868e;
    font-weight: 600;
  }

  .page-actions .primary {
    border-color: #25b9d7;
    background: #25b9d7;
    color: #fff;
  }

  .page-tabs {
    display: flex;
    border-bottom: 1px solid #dfdfdf;
    background: #fff;
    color: #6c868e;
  }

  .page-tabs a {
    position: relative;
    padding: 11px 17px 15px 16px;
  }

  .page-tabs .selected {
    padding-bottom: 13px;
    border-bottom: 2px solid #25b9d7;
    background: #f4f9fb;
    color: #363a41;
  }

  .page-tabs .badge {
    left: calc(100% - 12px);
    top: 4px;
  }

  .content {
    padding: 32px 9% 40px;
  }

  .search {
    width: calc((200% + 24px) / 3 - 16px);
    display: flex;
  }

  .search-box {
    flex: 1;
    height: 32px;
    display: flex;
    align-items: center;
    gap: 6px;
    padding: 0 6px;
    border: 1px solid #bbcdd2;
    background: #fff;
  }

  .search-box input {
    flex: 1;
    outline: none;
  }

  .tag {
    height: 18px;
    display: flex;
    align-items: center;
    gap: 7px;
    padding: 0 6px;
    border-radius: 3px;
    background: #25b9d7;
    color: #fff;
    font-size: 10px;
    font-weight: 600;
  }

  .tag .cross {
    color: #363a41;
  }

  .search > button {
    width: 43px;
    display: grid;
    place-items: center;
    border-radius: 0 3px 3px 0;
    background: #25b9d7;
    color: #fff;
  }

  .filters {
    display: grid;
    grid-template-columns: repeat(3, 1fr);
    gap: 24px;
    margin-bottom: 24px;
    padding: 22px 0 28px;
    border-bottom: 1px solid #bbcdd2;
  }

  .filter label {
    display: block;
    margin-bottom: 10px;
    font-weight: 700;
  }

  .disabled {
    opacity: 0.5;
  }

  .select {
    position: relative;
  }

  select {
    width: 100%;
    height: 32px;
    padding: 0 6px;
    border: 1px solid #bbcdd2;
    border-radius: 3px;
    appearance: none;
    background: #fff;
  }

  .select .chevron {
    position: absolute;
    right: 10px;
    top: 9px;
    color: #6c868e;
    pointer-events: none;
  }

  select:disabled {
    opacity: 1;
  }

  .content h2 {
    color: #202226;
    font-size: 14px;
    font-weight: 700;
    line-height: 22px;
  }

  article {
    display: flex;
    align-items: flex-start;
    margin: 16px 0 22px;
    padding: 12px 14px 14px 44px;
    border-radius: 4px;
    background: #fff;
  }

  .module-logo {
    width: 32px;
    height: 32px;
    margin-right: 56px;
  }

  .module-info {
    flex: 1;
    min-width: 0;
  }

  h3 {
    font-size: 13px;
    font-weight: 600;
    line-height: 15px;
  }

  .module-row {
    display: flex;
  }

  .meta {
    flex: 0 0 215px;
    font-size: 10px;
  }

  .description {
    max-width: 720px;
  }

  .description a {
    color: #25b9d7;
  }

  .module-actions {
    display: flex;
    align-items: center;
    padding-top: 16px;
  }

  .module-actions button {
    height: 32px;
    padding: 0 13px;
    border: 1px solid #25b9d7;
    border-radius: 3px 0 0 3px;
    color: #25b9d7;
    font-weight: 600;
  }

  .module-actions .drop {
    border-radius: 0 3px 3px 0;
  }

  .module-actions input {
    width: 16px;
    height: 16px;
    margin: -4px 0 0 6px;
    border: 1px solid #bbcdd2;
    border-radius: 1px;
    appearance: none;
  }

  /* taskbar */
  footer {
    height: 48px;
    display: grid;
    grid-template-columns: 1fr auto 1fr;
    align-items: center;
    border-top: 1px solid #dfd6cc;
    background: linear-gradient(to right, #f2e7da, #ece9da 33%, #f4e4d2 50%, #f3e5d4 66%, #e3e4e5 78%, #efe2cc 92%, #ece3d1);
    color: #1b1b1b;
  }

  .widgets {
    margin-left: 16px;
    justify-self: start;
  }

  .widgets svg,
  .app-icon {
    width: 24px;
    height: 24px;
  }

  .taskbar-apps {
    display: flex;
    align-items: center;
    gap: 4px;
  }

  .app {
    position: relative;
    width: 40px;
    height: 40px;
    display: grid;
    place-items: center;
    border-radius: 4px;
  }

  .focused {
    background: #faf4ec;
  }

  .focused::before,
  .running::before {
    content: '';
    position: absolute;
    bottom: 0;
    width: 6px;
    height: 3px;
    border-radius: 2px;
    background: #8a8178;
  }

  .focused::before {
    width: 16px;
    background: #5a7a8c;
  }

  .profile {
    position: absolute;
    right: 2px;
    top: 2px;
    width: 16px;
    height: 16px;
    border-radius: 50%;
    background: #689f38;
    color: #fff;
    font-size: 9px;
    line-height: 16px;
  }

  .taskbar-search {
    width: 218px;
    height: 32px;
    display: flex;
    align-items: center;
    gap: 10px;
    margin-right: 2px;
    padding: 0 6px 0 10px;
    border: 1px solid #ddd3c7;
    border-radius: 16px;
    background: #fbf8f2;
    color: #5b5854;
    font-size: 13px;
  }

  .taskbar-search input {
    flex: 1;
    min-width: 0;
    outline: none;
  }

  .glass {
    width: 16px;
    height: 16px;
    fill: none;
    stroke: #222;
    stroke-width: 1.5;
  }

  .bird {
    width: 46px;
    height: 26px;
  }

  .tray {
    justify-self: end;
    display: flex;
    align-items: center;
    gap: 8px;
    padding-right: 20px;
    font-size: 12px;
    line-height: 16px;
  }

  .tray-icon {
    width: 16px;
    height: 16px;
  }

  .line {
    fill: none;
    stroke: #1b1b1b;
  }

  .language {
    width: 40px;
    text-align: center;
  }

  .clock {
    width: 57px;
    text-align: right;
  }

  .count {
    width: 16px;
    height: 16px;
    border-radius: 50%;
    background: #5a7a8c;
    color: #fff;
    font-size: 11px;
    text-align: center;
  }
</style>
